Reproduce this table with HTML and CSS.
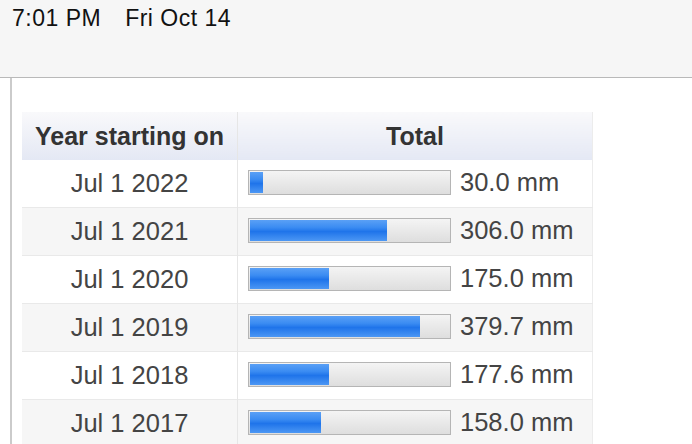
FILE: index.html
```html
<!DOCTYPE html>
<html>
<head>
<meta charset="utf-8">
<link rel="stylesheet" href="styles.css">
</head>
<body>
<div class="statusbar">
  <span class="time">7:01 PM</span><span class="date">Fri Oct 14</span>
</div>
<div class="content">
  <table class="stats">
    <thead>
      <tr><th class="col-year">Year starting on</th><th class="col-total">Total</th></tr>
    </thead>
    <tbody>
      <tr><td class="year">Jul 1 2022</td><td class="total"><div class="cell"><div class="bar"><div class="fill" style="width:6.7%"></div></div><span class="val">30.0 mm</span></div></td></tr>
      <tr class="alt"><td class="year">Jul 1 2021</td><td class="total"><div class="cell"><div class="bar"><div class="fill" style="width:68.8%"></div></div><span class="val">306.0 mm</span></div></td></tr>
      <tr><td class="year">Jul 1 2020</td><td class="total"><div class="cell"><div class="bar"><div class="fill" style="width:39.6%"></div></div><span class="val">175.0 mm</span></div></td></tr>
      <tr class="alt"><td class="year">Jul 1 2019</td><td class="total"><div class="cell"><div class="bar"><div class="fill" style="width:85.2%"></div></div><span class="val">379.7 mm</span></div></td></tr>
      <tr><td class="year">Jul 1 2018</td><td class="total"><div class="cell"><div class="bar"><div class="fill" style="width:39.9%"></div></div><span class="val">177.6 mm</span></div></td></tr>
      <tr class="alt"><td class="year">Jul 1 2017</td><td class="total"><div class="cell"><div class="bar"><div class="fill" style="width:35.5%"></div></div><span class="val">158.0 mm</span></div></td></tr>
    </tbody>
  </table>
</div>
</body>
</html>
```
FILE: styles.css
```css
html, body {
  margin: 0;
  padding: 0;
  background: #fff;
  overflow: hidden;
  height: 444px;
}
body {
  font-family: "Liberation Sans", Arial, sans-serif;
}
.statusbar {
  height: 70px;
  background: #f6f6f6;
  border-bottom: 1px solid #b9b9b9;
  padding: 7px 0 0 12px;
  font-size: 23px;
  letter-spacing: 0.5px;
  color: #111;
  line-height: 23px;
}
.statusbar .time {
  margin-right: 24px;
}
.content {
  margin-left: 10px;
  border-left: 2px solid #cbcbcb;
  padding: 34px 0 0 10px;
  height: 366px;
  box-sizing: border-box;
  overflow: hidden;
}
.stats {
  border-collapse: collapse;
  width: 571px;
  border-right: 1px solid #ececec;
}
.stats th {
  height: 48px;
  padding: 0;
  font-size: 25px;
  font-weight: bold;
  color: #333;
  background: linear-gradient(#f9f9fb, #e4e8f4);
  text-align: center;
}
.stats th.col-year {
  width: 215px;
  border-right: 1px solid #e6e6e6;
}
.stats td {
  height: 47px;
  padding: 0;
  border-top: 1px solid #e9e9e9;
  font-size: 25.5px;
  color: #444;
}
.stats tbody tr:first-child td {
  border-top: none;
  height: 47px;
}
.stats tr.alt td {
  background: #f6f6f6;
}
.stats td.year {
  text-align: center;
  border-right: 1px solid #e6e6e6;
}
.cell {
  display: flex;
  align-items: center;
  padding-left: 10px;
  margin-top: -2px;
}
.bar {
  width: 199px;
  height: 21px;
  border: 1px solid #b5b5b5;
  background: linear-gradient(#f4f4f4, #e9e9e9 50%, #dedede);
  padding: 1px;
  box-sizing: content-box;
  display: flex;
}
.fill {
  height: 100%;
  background: linear-gradient(#5aa0f6, #3b8cf2 35%, #1f74ea 55%, #4c97f4);
}
.val {
  margin-left: 9px;
}
```
